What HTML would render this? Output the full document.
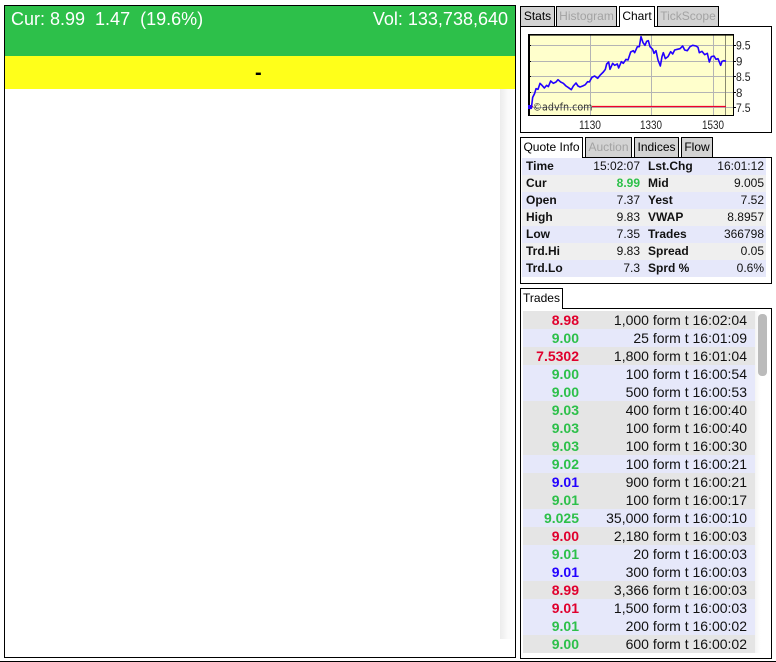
<!DOCTYPE html>
<html>
<head>
<meta charset="utf-8">
<style>
html,body{margin:0;padding:0;background:#fff;width:776px;height:662px;overflow:hidden;font-family:"Liberation Sans",Arial,sans-serif;}
.a{position:absolute;box-sizing:border-box;}
.box{position:absolute;box-sizing:border-box;border:1px solid #000;background:#fff;}
.tab{position:absolute;box-sizing:border-box;border:1px solid #000;border-bottom:none;background:#d3d3d3;color:#000;font-size:12px;line-height:19px;text-align:center;white-space:nowrap;}
.tab.off{color:#a3a3a3;}
.tab.on{background:#fff;height:21px;z-index:3;}
.q{position:absolute;left:522px;width:244px;height:17px;font-size:12px;line-height:17px;color:#111;}
.q b{position:absolute;}
.q span{position:absolute;text-align:right;white-space:nowrap;}
.q .l1{left:4px;}.q .v1{right:126px;}.q .l2{left:126px;}.q .v2{right:2px;}
.t{position:absolute;left:523px;width:232px;height:18px;font-size:14px;line-height:18px;color:#111;}
.t b{position:absolute;right:176px;}
.t span{position:absolute;right:8px;white-space:nowrap;}
.g{background:#e5e5e5;}.b{background:#e6e8fa;}
.cg{color:#2dc04a;}.cr{color:#e0002d;}.cb{color:#2200ff;}
</style>
</head>
<body>
<div class="box" style="left:4px;top:5px;width:512px;height:653px;"></div>
<div class="a" style="left:5px;top:6px;width:510px;height:50px;background:#2dc04a;"></div>
<div class="a" style="left:11px;top:9px;color:#fff;font-size:18px;line-height:21px;white-space:pre;">Cur: 8.99&nbsp; 1.47&nbsp; (19.6%)</div>
<div class="a" style="right:268px;top:9px;color:#fff;font-size:18px;line-height:21px;white-space:nowrap;">Vol: 133,738,640</div>
<div class="a" style="left:5px;top:56px;width:510px;height:33px;background:#ffff1a;"></div>
<div class="a" style="left:255px;top:62px;color:#000;font-size:20px;font-weight:bold;line-height:22px;">-</div>
<div class="a" style="left:500px;top:89px;width:15px;height:550px;background:linear-gradient(to right,#ececec,#fafafa 50%,#fff);"></div>
<div class="a" style="left:0;top:661px;width:776px;height:1px;background:#000;"></div>

<div class="tab" style="left:520px;top:6px;width:35px;height:20px;">Stats</div>
<div class="tab off" style="left:556px;top:6px;width:61px;height:20px;">Histogram</div>
<div class="tab on" style="left:619px;top:6px;width:36px;">Chart</div>
<div class="tab off" style="left:657px;top:6px;width:62px;height:20px;">TickScope</div>
<div class="box" style="left:520px;top:26px;width:252px;height:107px;"></div>

<svg class="a" style="left:0;top:0;z-index:2" width="776" height="662" viewBox="0 0 776 662">
<rect x="528.5" y="34.5" width="205" height="81" fill="#ffffcc"/>
<g stroke="#b4b4b4" stroke-width="1" fill="none">
<path d="M529 45.5H733M529 61.5H733M529 76.5H733M529 92.5H733M529 107.5H733"/>
<path d="M590.5 35V115M651.5 35V115M713.5 35V115"/>
</g>
<path d="M725.5 35V115" stroke="#8a8a70" stroke-width="1"/>
<text x="532.500" y="110.500" font-family="'DejaVu Sans',sans-serif" font-size="10.500" fill="#333" textLength="60" lengthAdjust="spacingAndGlyphs">©advfn.com</text>
<path d="M592 106.500H726M528 106.500H533" stroke="#f0002a" stroke-width="1.300"/>
<g transform="translate(516,0) scale(.33333)">
<polyline fill="none" stroke="#2200ff" stroke-width="4.800" stroke-linejoin="round" points="38,335 42,322 46,325 50,292 56,280 60,266 66,268 72,250 78,256 85,264 92,256 97,260 104,243 112,250 120,246 126,239 134,246 142,250 150,258 156,262 166,269 172,258 180,249 186,258 192,261 200,258 208,254 215,245 220,246 228,232 236,228 245,235 252,226 262,216 268,208 272,192 278,186 282,208 290,190 296,196 304,192 308,204 316,185 322,190 330,178 336,180 344,156 352,152 356,158 364,140 370,140 375,110 381,128 387,136 392,124 397,122 402,140 410,148 414,160 420,152 426,180 433,198 438,170 442,158 448,176 456,170 464,155 470,162 476,150 484,148 492,146 500,138 506,150 514,152 522,140 530,136 540,138 546,142 550,158 558,154 566,164 574,160 580,186 586,170 594,168 600,178 606,176 614,196 618,184 624,182 630,184"/>
</g>
<rect x="528" y="34" width="206" height="1.600" fill="#000"/>
<rect x="528" y="34" width="2" height="82" fill="#000"/>
<rect x="528" y="115" width="206" height="1" fill="#000"/>
<rect x="733" y="34" width="1" height="82" fill="#000"/>
<path d="M528 45.500h3M528 61.500h3M528 76.500h3M528 92.500h3M528 107.500h3M733 45.500h3M733 61.500h3M733 76.500h3M733 92.500h3M733 107.500h3" stroke="#000" stroke-width="1"/>
<rect x="528" y="105" width="3" height="4" fill="#2200ff"/>
<g font-family="'Liberation Sans',sans-serif" font-size="11.500" fill="#222">
<text x="736" y="49.500" textLength="14.500" lengthAdjust="spacingAndGlyphs">9.5</text>
<text x="736" y="65.500">9</text>
<text x="736" y="81" textLength="14.500" lengthAdjust="spacingAndGlyphs">8.5</text>
<text x="736" y="97">8</text>
<text x="736" y="112" textLength="14.500" lengthAdjust="spacingAndGlyphs">7.5</text>
<text x="579" y="129" textLength="22" lengthAdjust="spacingAndGlyphs">1130</text>
<text x="640" y="129" textLength="22" lengthAdjust="spacingAndGlyphs">1330</text>
<text x="702" y="129" textLength="22" lengthAdjust="spacingAndGlyphs">1530</text>
</g>
</svg>

<div class="tab on" style="left:520px;top:137px;width:63px;">Quote Info</div>
<div class="tab off" style="left:585px;top:137px;width:47px;height:20px;">Auction</div>
<div class="tab" style="left:634px;top:137px;width:45px;height:20px;">Indices</div>
<div class="tab" style="left:681px;top:137px;width:32px;height:20px;">Flow</div>
<div class="box" style="left:520px;top:157px;width:252px;height:127px;"></div>
<div class="q b" style="top:158px;"><b class="l1">Time</b><span class="v1">15:02:07</span><b class="l2">Lst.Chg</b><span class="v2">16:01:12</span></div>
<div class="q" style="top:175px;background:#efefef;"><b class="l1">Cur</b><span class="v1 cg" style="font-weight:bold;">8.99</span><b class="l2">Mid</b><span class="v2">9.005</span></div>
<div class="q b" style="top:192px;"><b class="l1">Open</b><span class="v1">7.37</span><b class="l2">Yest</b><span class="v2">7.52</span></div>
<div class="q" style="top:209px;background:#efefef;"><b class="l1">High</b><span class="v1">9.83</span><b class="l2">VWAP</b><span class="v2">8.8957</span></div>
<div class="q b" style="top:226px;"><b class="l1">Low</b><span class="v1">7.35</span><b class="l2">Trades</b><span class="v2">366798</span></div>
<div class="q" style="top:243px;background:#efefef;"><b class="l1">Trd.Hi</b><span class="v1">9.83</span><b class="l2">Spread</b><span class="v2">0.05</span></div>
<div class="q b" style="top:260px;"><b class="l1">Trd.Lo</b><span class="v1">7.3</span><b class="l2">Sprd %</b><span class="v2">0.6%</span></div>

<div class="tab on" style="left:520px;top:288px;width:43px;">Trades</div>
<div class="box" style="left:520px;top:308px;width:252px;height:351px;"></div>
<div class="a" style="left:755px;top:311px;width:14px;height:342px;background:linear-gradient(to right,#f4f4f4,#fff 40%);"></div>
<div class="a" style="left:758px;top:314px;width:9px;height:62px;background:#bbb;border-radius:4px;"></div>
<div class="t g" style="top:311px;"><b class="cr">8.98</b><span>1,000 form t 16:02:04</span></div>
<div class="t b" style="top:329px;"><b class="cg">9.00</b><span>25 form t 16:01:09</span></div>
<div class="t g" style="top:347px;"><b class="cr">7.5302</b><span>1,800 form t 16:01:04</span></div>
<div class="t b" style="top:365px;"><b class="cg">9.00</b><span>100 form t 16:00:54</span></div>
<div class="t b" style="top:383px;"><b class="cg">9.00</b><span>500 form t 16:00:53</span></div>
<div class="t g" style="top:401px;"><b class="cg">9.03</b><span>400 form t 16:00:40</span></div>
<div class="t g" style="top:419px;"><b class="cg">9.03</b><span>100 form t 16:00:40</span></div>
<div class="t g" style="top:437px;"><b class="cg">9.03</b><span>100 form t 16:00:30</span></div>
<div class="t b" style="top:455px;"><b class="cg">9.02</b><span>100 form t 16:00:21</span></div>
<div class="t g" style="top:473px;"><b class="cb">9.01</b><span>900 form t 16:00:21</span></div>
<div class="t g" style="top:491px;"><b class="cg">9.01</b><span>100 form t 16:00:17</span></div>
<div class="t b" style="top:509px;"><b class="cg">9.025</b><span>35,000 form t 16:00:10</span></div>
<div class="t g" style="top:527px;"><b class="cr">9.00</b><span>2,180 form t 16:00:03</span></div>
<div class="t b" style="top:545px;"><b class="cg">9.01</b><span>20 form t 16:00:03</span></div>
<div class="t b" style="top:563px;"><b class="cb">9.01</b><span>300 form t 16:00:03</span></div>
<div class="t g" style="top:581px;"><b class="cr">8.99</b><span>3,366 form t 16:00:03</span></div>
<div class="t b" style="top:599px;"><b class="cr">9.01</b><span>1,500 form t 16:00:03</span></div>
<div class="t b" style="top:617px;"><b class="cg">9.01</b><span>200 form t 16:00:02</span></div>
<div class="t g" style="top:635px;"><b class="cg">9.00</b><span>600 form t 16:00:02</span></div>
</body>
</html>
